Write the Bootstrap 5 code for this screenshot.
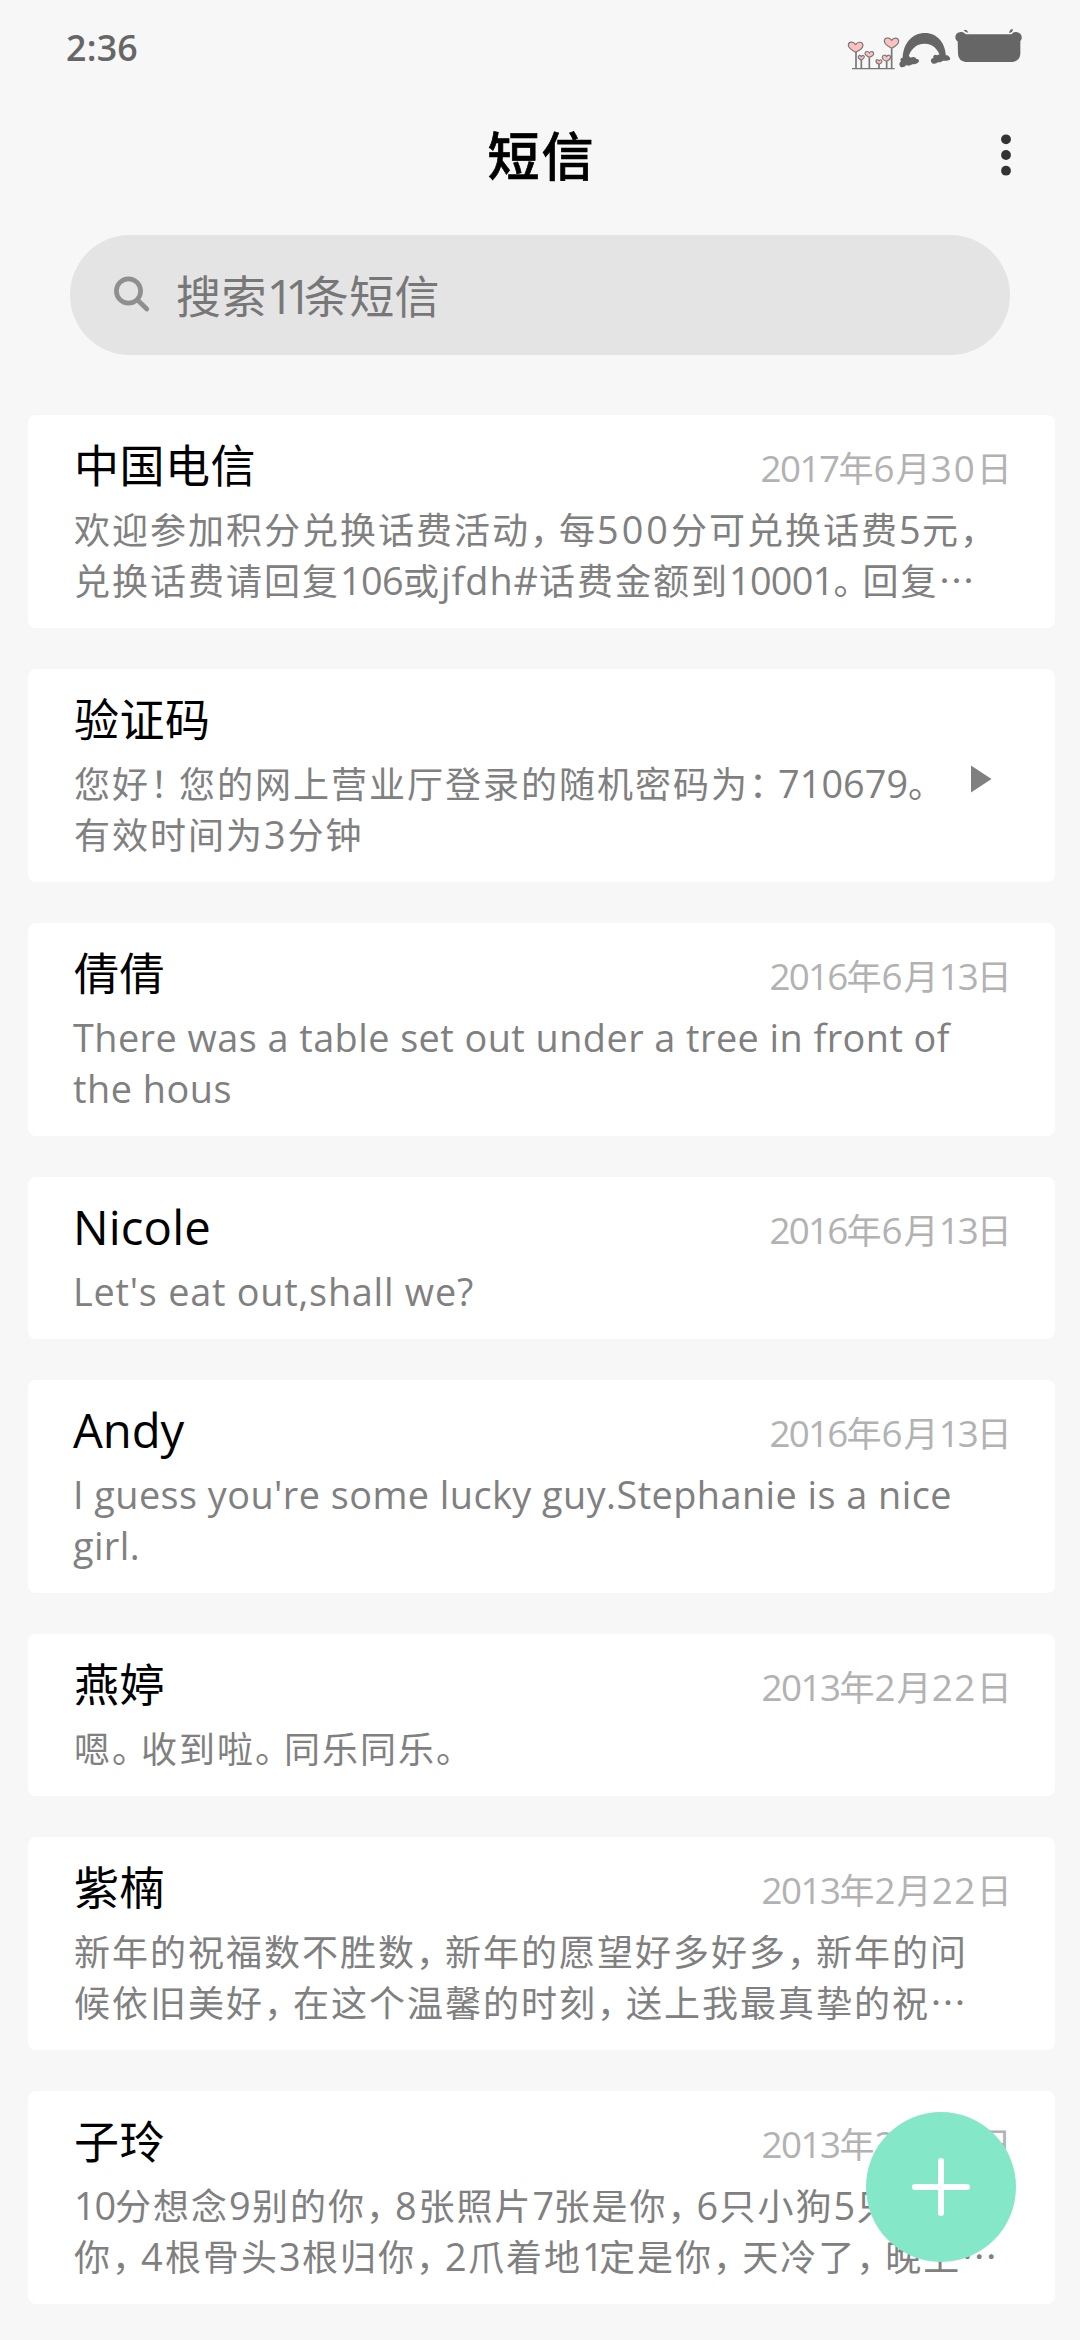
<!DOCTYPE html>
<html lang="zh-CN">
<head>
<meta charset="utf-8">
<meta name="viewport" content="width=device-width, initial-scale=1">
<title>短信</title>
<link href="https://cdn.jsdelivr.net/npm/bootstrap@5.3.0/dist/css/bootstrap.min.css" rel="stylesheet">
<style>
  body { background: #f7f7f7; font-family: "Noto Sans CJK SC", "Noto Sans", sans-serif; }
  .phone { width: 1080px; height: 2340px; }
  .statusbar { height: 90px; padding: 0 20px 0 66px; }
  .clock { font: 600 34px/50px "Open Sans", "Noto Sans", sans-serif; color: #666; padding-top: 23px; }
  .status-icons { margin-top: 10px; }
  .titlebar { height: 145px; padding: 0 66px 0 82px; }
  .titlebar h1 { font-size: 52px; font-weight: 500; line-height: 60px; letter-spacing: 2px; color: #000; padding-top: 34px; padding-left: 3px; -webkit-text-stroke: .7px #000; }
  .titlebar button { margin-top: 42px; }
  .search { height: 120px; margin: 0 70px 60px; padding-left: 42px; background: #e4e4e4; color: #777; font-size: 45px; line-height: 60px; letter-spacing: .4px; }
  .search .query { padding-left: 24px; }
  .threads { gap: 41px; padding: 0 25px 0 28px; }
  .thread { border-radius: 8px; padding: 19px 43px 23px 46px; }
  .who { font-size: 45px; line-height: 60px; height: 69px; letter-spacing: .5px; color: #000; }
  .when { font-size: 35px; line-height: 60px; padding-top: 3px; letter-spacing: .2px; color: #b2b2b2; }
  .body-line { font-size: 36px; line-height: 51px; height: 51px; letter-spacing: 2px; color: #808080; white-space: nowrap; }
  .latin { margin-left: -1px; }
  .pt { letter-spacing: -7px; }
  .fit { font-family: "Open Sans", "Noto Sans", sans-serif; font-size: 1.05em; line-height: 1; white-space: pre; letter-spacing: 0; }
  .play { margin-top: 8px; margin-right: 1px; }
  .fab { top: 2112px; left: 866px; width: 150px; height: 150px; background: #84e7c7; }
</style>
<script src="https://cdn.jsdelivr.net/npm/bootstrap@5.3.0/dist/js/bootstrap.bundle.min.js"></script>
</head>
<body>
<div class="phone position-relative overflow-hidden d-flex flex-column">
  <div class="statusbar d-flex justify-content-between align-items-start flex-shrink-0">
    <div class="clock"><span class="fit" data-w="72">2:36</span></div>
    <svg class="status-icons" width="240" height="80" viewBox="0 0 720 240" aria-hidden="true">
      <g stroke="#777" stroke-width="5" fill="none">
        <path d="M96 176H224" stroke-width="4"/>
        <path d="M108 124V176M124 150V176M148 142V176M177 160V176M200 154V176M215 115V176"/>
      </g>
      <g fill="#ffc0c0" stroke="#777" stroke-width="3.5" stroke-linejoin="round">
        <path d="M107 127C92 119 85 113 85 106C85 94 100 93 107 104C113 93 128 95 129 106C129 114 120 121 107 127Z"/>
        <path d="M215 115C200 107 193 101 193 94C193 81 208 81 215 91C221 81 236 82 236 94C236 103 227 109 215 115Z"/>
        <path d="M148 142C139 138 135 134 135 130C136 123 145 123 148 129C152 122 161 124 161 131C161 136 155 139 148 142Z"/>
        <path d="M199 154C190 150 186 145 187 141C188 134 197 134 200 140C203 133 212 135 212 142C211 148 206 151 199 154Z"/>
        <path d="M124 150C117 147 114 144 115 140C117 134 122 136 124 140C128 134 133 136 133 141C132 146 129 148 124 150Z"/>
        <path d="M177 163C170 160 167 156 168 152C170 147 175 149 177 153C180 147 185 149 186 154C185 159 182 161 177 163Z"/>
      </g>
      <g fill="#666">
        <path d="M248 146C249 99 277 69 315 69C352 69 377 99 378 142L362 144C356 119 339 101 314 101C288 101 270 119 264 146Z"/>
        <path d="M241 170C236 164 238 157 243 154C238 146 246 141 252 144C257 136 268 137 272 143C280 139 288 142 288 146C298 146 300 156 293 158C286 164 279 162 276 163C270 169 261 167 258 165C255 172 245 173 241 170Z"/>
        <path d="M335 158C330 151 334 145 340 144C338 136 346 132 352 136C358 130 368 133 370 138C377 133 387 136 387 140C393 143 391 151 385 151C379 154 370 151 368 153C362 158 355 157 354 156C349 163 338 162 335 158Z"/>
        <path d="M413 94C402 88 404 69 419 67C428 64 434 69 437 73H575C578 68 584 65 592 67C607 70 608 86 601 93V133Q598 153 579 156H436Q416 153 414 133Z"/>
        <path d="M431 61Q440 55 445 68Q437 68 431 61ZM567 69Q570 55 579 58Q579 67 567 69Z"/>
      </g>
    </svg>
  </div>

  <header class="titlebar d-flex align-items-start flex-shrink-0">
    <h1 class="flex-grow-1 text-center mb-0">短信</h1>
    <button class="btn p-0 border-0 lh-1" type="button" aria-label="更多">
      <svg class="d-block" width="16" height="46" viewBox="0 0 16 46" fill="#333"><circle cx="8" cy="7.3" r="4.9"/><circle cx="8" cy="23" r="4.9"/><circle cx="8" cy="38.7" r="4.9"/></svg>
    </button>
  </header>

  <div class="search rounded-pill d-flex align-items-center flex-shrink-0">
    <svg width="40" height="40" viewBox="0 0 40 40" fill="none" stroke="#8f8f8f" stroke-width="4.7" stroke-linecap="round"><circle cx="16.500" cy="16" r="12.100"/><path d="M25.500 25L34.800 34"/></svg>
    <div class="query">搜索<span class="fit" data-w="37">11</span>条短信</div>
  </div>

  <main class="threads d-flex flex-column">
    <article class="thread bg-white">
      <div class="d-flex justify-content-between"><div class="who">中国电信</div>
        <div class="when"><span class="fit" data-w="78">2017</span>年<span class="fit" data-w="22">6</span>月<span class="fit" data-w="46">30</span>日</div></div>
      <div class="body-line">欢迎参加积分兑换话费活动<span class="pt">，</span>每<span class="fit" data-w="74">500</span>分可兑换话费<span class="fit" data-w="23">5</span>元<span class="pt">，</span></div>
      <div class="body-line">兑换话费请回复<span class="fit" data-w="63">106</span>或<span class="fit" data-w="98">jfdh#</span>话费金额到<span class="fit" data-w="104.5">10001</span><span class="pt">。</span>回复⋯</div>
    </article>

    <article class="thread bg-white">
      <div class="who">验证码</div>
      <div class="d-flex justify-content-between align-items-start">
        <div>
          <div class="body-line">您好<span class="pt">！</span>您的网上营业厅登录的随机密码为<span class="pt">：</span><span class="fit" data-w="130">710679</span><span class="pt">。</span></div>
          <div class="body-line">有效时间为<span class="fit" data-w="23.500">3</span>分钟</div>
        </div>
        <svg class="play" width="40" height="28" viewBox="0 0 40 28" fill="#808080"><path d="M0 .5L20.500 14L0 27.500Z"/></svg>
      </div>
    </article>

    <article class="thread bg-white">
      <div class="d-flex justify-content-between"><div class="who">倩倩</div>
        <div class="when"><span class="fit" data-w="77">2016</span>年<span class="fit" data-w="22">6</span>月<span class="fit" data-w="38">13</span>日</div></div>
      <div class="body-line latin"><span class="fit" data-w="877">There was a table set out under a tree in front of</span></div>
      <div class="body-line latin"><span class="fit" data-w="159">the hous</span></div>
    </article>

    <article class="thread bg-white">
      <div class="d-flex justify-content-between"><div class="who latin"><span class="fit" data-w="138">Nicole</span></div>
        <div class="when"><span class="fit" data-w="77">2016</span>年<span class="fit" data-w="22">6</span>月<span class="fit" data-w="38">13</span>日</div></div>
      <div class="body-line latin"><span class="fit" data-w="401">Let's eat out,shall we?</span></div>
    </article>

    <article class="thread bg-white">
      <div class="d-flex justify-content-between"><div class="who latin"><span class="fit" data-w="111">Andy</span></div>
        <div class="when"><span class="fit" data-w="77">2016</span>年<span class="fit" data-w="22">6</span>月<span class="fit" data-w="38">13</span>日</div></div>
      <div class="body-line latin"><span class="fit" data-w="879">I guess you're some lucky guy.Stephanie is a nice</span></div>
      <div class="body-line latin"><span class="fit" data-w="67">girl.</span></div>
    </article>

    <article class="thread bg-white">
      <div class="d-flex justify-content-between"><div class="who">燕婷</div>
        <div class="when"><span class="fit" data-w="78">2013</span>年<span class="fit" data-w="22">2</span>月<span class="fit" data-w="45">22</span>日</div></div>
      <div class="body-line">嗯<span class="pt">。</span>收到啦<span class="pt">。</span>同乐同乐<span class="pt">。</span></div>
    </article>

    <article class="thread bg-white">
      <div class="d-flex justify-content-between"><div class="who">紫楠</div>
        <div class="when"><span class="fit" data-w="78">2013</span>年<span class="fit" data-w="22">2</span>月<span class="fit" data-w="45">22</span>日</div></div>
      <div class="body-line">新年的祝福数不胜数<span class="pt">，</span>新年的愿望好多好多<span class="pt">，</span>新年的问</div>
      <div class="body-line">候依旧美好<span class="pt">，</span>在这个温馨的时刻<span class="pt">，</span>送上我最真挚的祝⋯</div>
    </article>

    <article class="thread bg-white">
      <div class="d-flex justify-content-between"><div class="who">子玲</div>
        <div class="when"><span class="fit" data-w="78">2013</span>年<span class="fit" data-w="22">2</span>月<span class="fit" data-w="45">22</span>日</div></div>
      <div class="body-line"><span class="fit" data-w="41">10</span>分想念<span class="fit" data-w="23">9</span>别的你<span class="pt">，</span><span class="fit" data-w="23.500">8</span>张照片<span class="fit" data-w="21">7</span>张是你<span class="pt">，</span><span class="fit" data-w="23">6</span>只小狗<span class="fit" data-w="23">5</span>只</div>
      <div class="body-line">你<span class="pt">，</span><span class="fit" data-w="24">4</span>根骨头<span class="fit" data-w="23">3</span>根归你<span class="pt">，</span><span class="fit" data-w="23">2</span>爪着地<span class="fit" data-w="17">1</span>定是你<span class="pt">，</span>天冷了<span class="pt">，</span>晚上⋯</div>
    </article>
  </main>

  <button class="fab btn p-0 border-0 rounded-circle position-absolute d-flex align-items-center justify-content-center" type="button" aria-label="新建短信">
    <svg width="58" height="58" viewBox="0 0 58 58" stroke="#fff" stroke-width="6" stroke-linecap="round"><path d="M29 3V55M3 29H55"/></svg>
  </button>
</div>
<script>
  // Tracks each Latin run so that it takes up its data-w width.
  document.querySelectorAll('.fit').forEach(function (el) {
    var natural = el.getBoundingClientRect().width;
    el.style.letterSpacing = ((parseFloat(el.dataset.w) - natural) / el.textContent.length) + 'px';
  });
</script>
</body>
</html>
